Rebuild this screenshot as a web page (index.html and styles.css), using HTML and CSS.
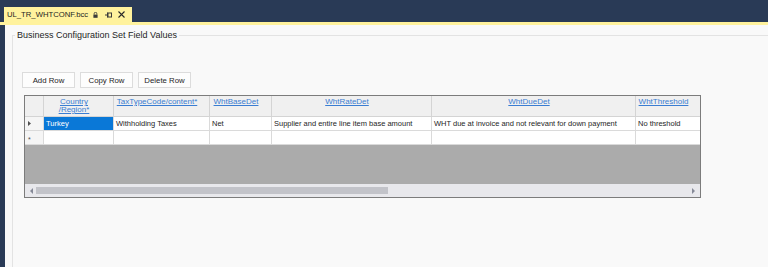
FILE: index.html
```html
<!DOCTYPE html>
<html lang="en">
<head>
    <meta charset="UTF-8">
    <title>UL_TR_WHTCONF.bcc</title>
    <link rel="stylesheet" href="styles.css">
</head>
<body>
    <!-- Document tab -->
    <div class="doc-tabs">
        <div class="tab">
            <span class="tab-title">UL_TR_WHTCONF.bcc</span>
            <svg class="tab-lock" width="5" height="6" viewBox="0 0 5 6">
                <path d="M1.2 2.6V1.6a1.3 1.3 0 0 1 2.6 0v1" fill="none" stroke="#3a3a3a" stroke-width="0.9"/>
                <rect x="0.4" y="2.6" width="4.2" height="3.2" fill="#3a3a3a"/>
            </svg>
            <svg class="tab-pin" width="7" height="6" viewBox="0 0 7 6">
                <path d="M0 3h2.5" stroke="#3a3a3a" stroke-width="1"/>
                <rect x="3" y="1" width="3.5" height="4" fill="none" stroke="#3a3a3a" stroke-width="1"/>
                <path d="M2.5 0.5v5" stroke="#3a3a3a" stroke-width="1"/>
            </svg>
            <svg class="tab-close" width="7" height="7" viewBox="0 0 7 7">
                <path d="M0.5 0.5l6 6M6.5 0.5l-6 6" stroke="#2a2a2a" stroke-width="1.1"/>
            </svg>
        </div>
    </div>
    <div class="tab-line"></div>

    <!-- Editor -->
    <div class="editor">
        <fieldset class="group">
            <legend>Business Configuration Set Field Values</legend>

            <div class="toolbar">
                <button class="btn">Add Row</button>
                <button class="btn">Copy Row</button>
                <button class="btn">Delete Row</button>
            </div>

            <div class="grid">
                <div class="grid-row head">
                    <div class="cell row-head"></div>
                    <div class="cell"><span class="col-link">Country<br>/Region*</span></div>
                    <div class="cell"><span class="col-link">TaxTypeCode/content*</span></div>
                    <div class="cell"><span class="col-link">WhtBaseDet</span></div>
                    <div class="cell"><span class="col-link">WhtRateDet</span></div>
                    <div class="cell"><span class="col-link">WhtDueDet</span></div>
                    <div class="cell last"><span class="col-link">WhtThreshold</span></div>
                </div>
                <div class="grid-row">
                    <div class="cell row-head">
                        <svg width="3" height="5" viewBox="0 0 3 5"><path d="M0 0l3 2.5L0 5z" fill="#505050"/></svg>
                    </div>
                    <div class="cell selected">Turkey</div>
                    <div class="cell">Withholding Taxes</div>
                    <div class="cell">Net</div>
                    <div class="cell">Supplier and entire line item base amount</div>
                    <div class="cell">WHT due at invoice and not relevant for down payment</div>
                    <div class="cell last">No threshold</div>
                </div>
                <div class="grid-row">
                    <div class="cell row-head star">*</div>
                    <div class="cell"></div>
                    <div class="cell"></div>
                    <div class="cell"></div>
                    <div class="cell"></div>
                    <div class="cell"></div>
                    <div class="cell last"></div>
                </div>
                <div class="grid-empty"></div>
                <div class="hscroll">
                    <svg width="3" height="6" viewBox="0 0 3 6"><path d="M3 0L0 3l3 3z" fill="#858997"/></svg>
                    <div class="thumb"></div>
                    <svg class="arrow-right" width="3" height="6" viewBox="0 0 3 6"><path d="M0 0l3 3-3 3z" fill="#858997"/></svg>
                </div>
            </div>
        </fieldset>
    </div>
</body>
</html>
```

FILE: styles.css
```css
* {
    box-sizing: border-box;
    margin: 0;
    padding: 0;
}

body {
    font-family: "Liberation Sans", Arial, sans-serif;
    font-size: 7.5px;
    color: #1e1e1e;
    background-color: #293a56;
    height: 100vh;
    display: flex;
    flex-direction: column;
    overflow: hidden;
}

/* tab strip */
.doc-tabs {
    display: flex;
    padding: 7px 0 0 4px;
}

.tab {
    display: flex;
    align-items: center;
    width: 128px;
    height: 15px;
    padding-left: 3px;
    background-color: #fff29d;
}

.tab-title {
    font-size: 7.7px;
}

.tab-lock {
    margin-left: 5px;
}

.tab-pin {
    margin-left: 7px;
}

.tab-close {
    margin-left: 6px;
}

.tab-line {
    height: 3px;
    background-color: #fff29d;
}

/* editor body */
.editor {
    flex: 1;
    margin-left: 5px;
    background-color: #f9f9f9;
    display: flex;
    flex-direction: column;
}

.group {
    flex: 1;
    min-width: 0;
    margin: 5px 0 0 7px;
    padding: 32px 0 0 9px;
    border: none;
    border-top: 1px solid #e3e3e3;
    border-left: 1px solid #e3e3e3;
}

.group legend {
    margin-left: -7px;
    padding: 0 2px;
    font-size: 9px;
    line-height: 10px;
}

.toolbar {
    display: flex;
    gap: 5px;
}

.btn {
    width: 53px;
    height: 16px;
    font-family: inherit;
    font-size: 7.8px;
    color: #1e1e1e;
    background-color: #fdfdfd;
    border: 1px solid #dcdcdc;
}

/* data grid */
.grid {
    width: 677px;
    margin: 7px 0 0 2px;
    border: 1px solid #7c7c7c;
    background-color: #ababab;
    overflow: hidden;
}

.grid-row {
    display: grid;
    grid-template-columns: 19px 70px 96px 62px 160px 204px 64px;
    background-color: #fff;
}

.cell {
    height: 14px;
    line-height: 13px;
    padding-left: 2px;
    border-right: 1px solid #dadada;
    border-bottom: 1px solid #dadada;
    white-space: nowrap;
    overflow: hidden;
}

.cell.last {
    border-right: none;
}

.head .cell {
    height: 21px;
    padding: 2px 10px 0 1px;
    font-size: 8px;
    line-height: 8px;
    text-align: center;
    background-color: #f0f0f0;
    border-color: #d4d4d4;
}

.col-link {
    color: #3a7dd2;
    text-decoration: underline;
}

.row-head {
    display: flex;
    align-items: center;
    padding-left: 3px;
    background-color: #f5f5f5;
}

.star {
    padding-top: 3px;
    font-size: 7px;
    color: #505050;
}

.selected {
    background-color: #0a78d7;
    color: #fff;
}

.grid-empty {
    height: 39px;
}

.hscroll {
    height: 13px;
    display: flex;
    align-items: center;
    padding: 0 5px 0 5px;
    background-color: #e8e8ec;
}

.thumb {
    width: 352px;
    height: 7px;
    margin-left: 3px;
    background-color: #c2c3c9;
}

.arrow-right {
    margin-left: auto;
}
```
